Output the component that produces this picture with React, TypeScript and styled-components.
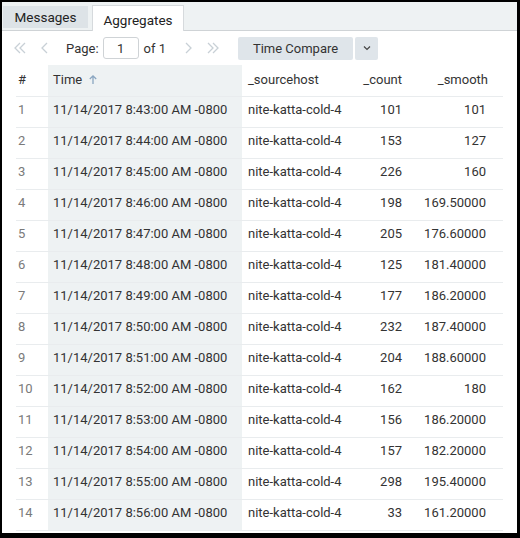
import React from "react";
import styled, { createGlobalStyle } from "styled-components";

const Global = createGlobalStyle`
  html, body { margin: 0; padding: 0; background: #000; }
  body { font-family: Roboto, "Liberation Sans", sans-serif; }
  * { box-sizing: border-box; }
`;

const Frame = styled.div`
  margin: 2px 3px 0 2px;
  width: 515px;
  height: 531px;
  background: #fff;
  display: flex;
  flex-direction: column;
  overflow: hidden;
`;

const TabBar = styled.div`
  height: 29px;
  background: #eef2f3;
  border-bottom: 1px solid #cfd3d6;
  display: flex;
  align-items: flex-end;
  padding-left: 1px;
  gap: 4px;
`;

const Tab = styled.div<{ $active?: boolean }>`
  height: ${(p) => (p.$active ? "26px" : "22px")};
  margin-bottom: ${(p) => (p.$active ? "-1px" : "2px")};
  width: ${(p) => (p.$active ? "92px" : "85px")};
  background: ${(p) => (p.$active ? "#fff" : "#dde3e7")};
  border: ${(p) => (p.$active ? "1px solid #d6dadd" : "none")};
  border-bottom: none;
  display: flex;
  align-items: center;
  justify-content: center;
  font-size: 13.5px;
  color: #222;
  padding-top: ${(p) => (p.$active ? "2px" : "0")};
`;

const Toolbar = styled.div`
  height: 34px;
  display: flex;
  align-items: center;
  padding-left: 7px;
  font-size: 13px;
  color: #333;
`;

const NavIcon = styled.span`
  display: inline-flex;
  width: 22px;
  justify-content: center;
  color: #c8d0d6;
  margin-right: 3px;
`;

const PageLabel = styled.span`
  margin-left: 7px;
  margin-right: 4px;
`;

const PageInput = styled.div`
  width: 36px;
  height: 22px;
  border: 1px solid #cfd3d6;
  border-radius: 3px;
  display: flex;
  align-items: center;
  justify-content: center;
  font-size: 13px;
`;

const OfLabel = styled.span`
  margin-left: 5px;
  margin-right: 11px;
`;

const ButtonGroup = styled.div`
  display: flex;
  margin-left: 11px;
  gap: 2px;
`;

const Button = styled.div<{ $w: number }>`
  width: ${(p) => p.$w}px;
  height: 23px;
  background: #dfe5ea;
  border-radius: 2px;
  display: flex;
  align-items: center;
  justify-content: center;
  font-size: 13px;
  color: #333;
`;

const Table = styled.div`
  margin-left: 14px;
  width: 487px;
  display: flex;
  flex-direction: column;
`;

const Row = styled.div<{ $header?: boolean }>`
  display: grid;
  grid-template-columns: 32px 194px 120px 46px 95px;
  height: ${(p) => (p.$header ? "32px" : "31px")};
  padding-bottom: ${(p) => (p.$header ? "3px" : "5px")};
  border-bottom: 1px solid #e9ecee;
  font-size: 13px;
  color: #333;
`;

const Cell = styled.div<{ $align?: "right"; $shade?: boolean; $muted?: boolean; $pr?: number; $pl?: number }>`
  display: flex;
  align-items: center;
  justify-content: ${(p) => (p.$align === "right" ? "flex-end" : "flex-start")};
  padding-left: ${(p) => p.$pl ?? (p.$shade ? 5 : p.$align ? 0 : 2)}px;
  padding-right: ${(p) => p.$pr ?? 0}px;
  color: ${(p) => (p.$muted ? "#7a7a7a" : "#333")};
  white-space: nowrap;
  position: relative;
  ${(p) =>
    p.$shade &&
    `
    &::before {
      content: "";
      position: absolute;
      left: 0; right: 0; top: 0; bottom: -6px;
      background: #eef2f3;
      z-index: -1;
    }
  `}
`;

const Body = styled.div`
  position: relative;
  z-index: 0;
  display: flex;
  flex-direction: column;
`;

const SortArrow = styled.span`
  margin-left: 6px;
  color: #8aa6c1;
  display: inline-flex;
`;

const Chev = ({ d }: { d: string }) => (
  <svg width="16" height="16" viewBox="0 0 16 16" fill="none" stroke="currentColor" strokeWidth="1.3">
    <path d={d} />
  </svg>
);

const rows: [string, string, string][] = [
  ["8:43", "101", "101"],
  ["8:44", "153", "127"],
  ["8:45", "226", "160"],
  ["8:46", "198", "169.50000"],
  ["8:47", "205", "176.60000"],
  ["8:48", "125", "181.40000"],
  ["8:49", "177", "186.20000"],
  ["8:50", "232", "187.40000"],
  ["8:51", "204", "188.60000"],
  ["8:52", "162", "180"],
  ["8:53", "156", "186.20000"],
  ["8:54", "157", "182.20000"],
  ["8:55", "298", "195.40000"],
  ["8:56", "33", "161.20000"],
];

export default function App() {
  return (
    <>
      <Global />
      <Frame>
        <TabBar>
          <Tab>Messages</Tab>
          <Tab $active>Aggregates</Tab>
        </TabBar>
        <Toolbar>
          <NavIcon><Chev d="M8 3 L3 8 L8 13 M13 3 L8 8 L13 13" /></NavIcon>
          <NavIcon><Chev d="M10 3 L5 8 L10 13" /></NavIcon>
          <PageLabel>Page:</PageLabel>
          <PageInput>1</PageInput>
          <OfLabel>of 1</OfLabel>
          <NavIcon><Chev d="M6 3 L11 8 L6 13" /></NavIcon>
          <NavIcon><Chev d="M3 3 L8 8 L3 13 M8 3 L13 8 L8 13" /></NavIcon>
          <ButtonGroup>
            <Button $w={115}>Time Compare</Button>
            <Button $w={23}>
              <svg width="10" height="10" viewBox="0 0 10 10" fill="none" stroke="#444" strokeWidth="1.2">
                <path d="M2 3.5 L5 6.5 L8 3.5" />
              </svg>
            </Button>
          </ButtonGroup>
        </Toolbar>
        <Table>
          <Body>
            <Row $header>
              <Cell>#</Cell>
              <Cell $shade>
                Time
                <SortArrow>
                  <svg width="10" height="11" viewBox="0 0 10 11" fill="none" stroke="currentColor" strokeWidth="1.3">
                    <path d="M5 10 V2 M1.8 5 L5 1.8 L8.2 5" />
                  </svg>
                </SortArrow>
              </Cell>
              <Cell $pl={6}>_sourcehost</Cell>
              <Cell $align="right" $pr={6}>_count</Cell>
              <Cell $align="right" $pr={15}>_smooth</Cell>
            </Row>
            {rows.map(([t, c, s], i) => (
              <Row key={i}>
                <Cell $muted>{i + 1}</Cell>
                <Cell $shade>{`11/14/2017 ${t}:00 AM -0800`}</Cell>
                <Cell $pl={6}>nite-katta-cold-4</Cell>
                <Cell $align="right" $pr={6}>{c}</Cell>
                <Cell $align="right" $pr={17}>{s}</Cell>
              </Row>
            ))}
          </Body>
        </Table>
      </Frame>
    </>
  );
}
